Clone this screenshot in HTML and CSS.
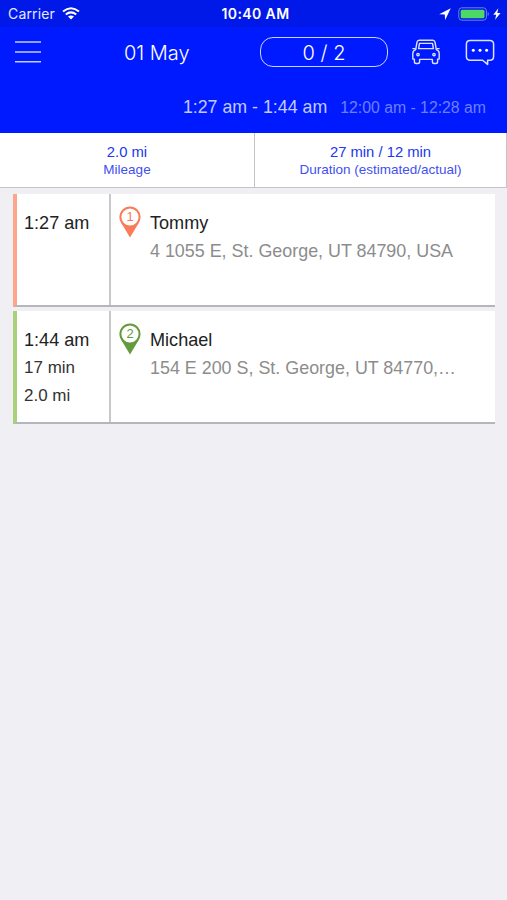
FILE: index.html
```html
<!doctype html>
<html lang="en">
  <head>
    <meta charset="utf-8">
    <title>01 May</title>
    <link rel="stylesheet" href="styles.css">
  </head>
  <body>

    <div class="status-bar">
      <div class="carrier">
        <span>Carrier</span>
        <svg class="wifi" width="18" height="13" viewBox="0 0 18 13">
          <path d="M1 4.6Q9-2.2 17 4.6M3.8 7.6Q9 3.2 14.2 7.6" fill="none" stroke="#fff" stroke-width="2"/>
          <path d="M6 9.6Q9 7.2 12 9.6L9 12.6z" fill="#fff"/>
        </svg>
      </div>
      <div class="clock">10:40 AM</div>
      <div class="indicators">
        <svg class="location" width="12" height="12" viewBox="0 0 12 12"><path d="M11.8.2L.2 6.2l5.6.4.3 5.3z" fill="#fff"/></svg>
        <svg class="battery" width="32" height="14" viewBox="0 0 32 14">
          <rect x=".8" y=".8" width="27.6" height="12.4" rx="3" fill="none" stroke="#6f7ff2"/>
          <rect x="2.7" y="2.7" width="23.8" height="8.6" rx="1.5" fill="#4cd964"/>
          <path d="M29.7 4.8q2.4 2.2 0 4.4z" fill="#6f7ff2"/>
        </svg>
        <svg class="bolt" width="8" height="12" viewBox="0 0 8 12"><path d="M5.3.3L.3 6.8h2.9L2.1 11.8l5.4-6.9H4.3z" fill="#fff"/></svg>
      </div>
    </div>

    <header class="header">
      <div class="nav">
        <svg class="menu" width="26" height="22" viewBox="0 0 26 22"><path d="M0 1h26M0 11h26M0 20.8h26" stroke="#c4ccff" stroke-width="1.5"/></svg>
        <h1 class="date">01 May</h1>
        <div class="count">0 / 2</div>
        <svg class="car" width="30" height="26" viewBox="0 0 30 26" fill="none" stroke="#dce1ff" stroke-width="1.4" stroke-linejoin="round">
          <path d="M4.7 10.6L6 3.2Q6.4 1.2 8.2 1.2h13.6q1.8 0 2.2 2l1.3 7.4q2.9 1 2.9 3.6v5.9h-1.6v2.6q0 1.8-1.8 1.8h-1.6q-1.8 0-1.8-1.8v-2.3H8.6v2.3q0 1.8-1.8 1.8H5.2q-1.8 0-1.8-1.8v-2.6H1.8v-5.9q0-2.6 2.9-3.6z"/>
          <path d="M7.6 9.6l.9-5.2h13l.9 5.2zM1.4 9.6h3.2M25.4 9.6h3.2"/>
          <circle cx="7" cy="15.6" r="1.2"/>
          <circle cx="23" cy="15.6" r="1.2"/>
        </svg>
        <svg class="chat" width="30" height="27" viewBox="0 0 30 27">
          <path d="M5.2 1.4h19.6q3.8 0 3.8 3.8v12.2q0 3.8-3.8 3.8h-2.2v4.2l-5-4.2H5.2q-3.8 0-3.8-3.8V5.2q0-3.8 3.8-3.8z" fill="none" stroke="#dce1ff" stroke-width="1.5" stroke-linejoin="round"/>
          <circle cx="8.3" cy="11.3" r="1.5" fill="#fff"/>
          <circle cx="15" cy="11.3" r="1.5" fill="#fff"/>
          <circle cx="21.6" cy="11.3" r="1.5" fill="#fff"/>
        </svg>
      </div>
      <div class="times">
        <span class="planned">1:27 am - 1:44 am</span>
        <span class="actual">12:00 am - 12:28 am</span>
      </div>
    </header>

    <section class="stats">
      <div class="stat">
        <strong>2.0 mi</strong>
        <span>Mileage</span>
      </div>
      <div class="stat">
        <strong>27 min / 12 min</strong>
        <span>Duration (estimated/actual)</span>
      </div>
    </section>

    <ul class="stops">
      <li class="stop pickup">
        <div class="when">
          <h2>1:27 am</h2>
        </div>
        <div class="who">
          <svg class="pin" width="22" height="32" viewBox="0 0 22 32">
            <path d="M11 31.6L2 16.5h18z" fill="currentColor"/>
            <circle cx="11" cy="11" r="9.6" fill="#fff" stroke="currentColor" stroke-width="2"/>
            <text x="11" y="15.2" text-anchor="middle">1</text>
          </svg>
          <div class="details">
            <h2>Tommy</h2>
            <p class="address">4 1055 E, St. George, UT 84790, USA</p>
          </div>
        </div>
      </li>
      <li class="stop dropoff">
        <div class="when">
          <h2>1:44 am</h2>
          <p>17 min</p>
          <p>2.0 mi</p>
        </div>
        <div class="who">
          <svg class="pin" width="22" height="32" viewBox="0 0 22 32">
            <path d="M11 31.6L2 16.5h18z" fill="currentColor"/>
            <circle cx="11" cy="11" r="9.6" fill="#fff" stroke="currentColor" stroke-width="2"/>
            <text x="11" y="15.2" text-anchor="middle">2</text>
          </svg>
          <div class="details">
            <h2>Michael</h2>
            <p class="address">154 E 200 S, St. George, UT 84770,…</p>
          </div>
        </div>
      </li>
    </ul>

  </body>
</html>
```
FILE: styles.css
```css
* {
  box-sizing: border-box;
}

body, h1, h2, p, ul {
  margin: 0;
  padding: 0;
  font-weight: normal;
}

body {
  min-height: 900px;
  background: #efeff4;
  font-family: "Liberation Sans", Arial, Helvetica, sans-serif;
}

svg {
  display: block;
  flex: none;
}

/* status bar */

.status-bar {
  display: grid;
  grid-template-columns: 1fr auto 1fr;
  align-items: center;
  height: 27px;
  padding: 0 6px 0 8px;
  background: #0018e8;
  color: #fff;
  font-family: Inter, Roboto, sans-serif;
  font-size: 14px;
}

.carrier {
  display: flex;
  align-items: center;
  gap: 7px;
  color: #e6e9ff;
  letter-spacing: .15px;
}

.clock {
  padding-left: 2px;
  font-weight: 600;
  letter-spacing: .4px;
}

.indicators {
  display: flex;
  align-items: center;
  justify-content: flex-end;
}

.battery {
  margin-left: 7px;
}

.bolt {
  margin-left: 3px;
}

/* header */

.header {
  height: 106px;
  background: #001aff;
  color: #fff;
}

.nav {
  display: flex;
  align-items: center;
  height: 50px;
  padding-left: 15px;
}

.date {
  width: 68px;
  margin: 2px 0 0 83px;
  font-family: Inter, Roboto, sans-serif;
  font-size: 20px;
  font-weight: 300;
  white-space: nowrap;
}

.count {
  width: 128px;
  height: 30px;
  margin-left: 68px;
  border: 1.5px solid #ccd3ff;
  border-radius: 13px;
  font-family: Inter, Roboto, sans-serif;
  font-size: 20px;
  font-weight: 300;
  line-height: 30px;
  text-align: center;
}

.car {
  margin-left: 23px;
}

.chat {
  margin-left: 24px;
}

.times {
  display: flex;
  align-items: baseline;
  justify-content: flex-end;
  padding: 20px 21px 0 0;
  white-space: nowrap;
}

.planned {
  margin-right: 13px;
  color: #c3caff;
  font-size: 17.8px;
}

.actual {
  color: #6f7ffa;
  font-size: 15.8px;
}

/* mileage and duration */

.stats {
  display: grid;
  grid-template-columns: 255px 1fr;
  height: 55px;
  border-bottom: 1px solid #c4c4c8;
  background: #fff;
}

.stat {
  padding-top: 10px;
  border-right: 1px solid #c4c4c8;
  color: #3f50f0;
  text-align: center;
}

.stat strong,
.stat span {
  display: block;
  font-weight: normal;
}

.stat strong {
  color: #2038ee;
  font-size: 14.8px;
  line-height: 18px;
}

.stat span {
  font-size: 13.5px;
  line-height: 17px;
}

/* stops */

.stops {
  padding: 6px 12px 0 13px;
  list-style: none;
}

.stop {
  display: flex;
  height: 113px;
  margin-bottom: 4px;
  border-bottom: 2px solid #b5b6ba;
  border-left: 4px solid;
  background: #fff;
}

.pickup {
  border-left-color: #ffa58e;
}

.dropoff {
  border-left-color: #a9d17c;
}

.stop h2 {
  color: #222;
  font-size: 18.1px;
  line-height: 28px;
}

.when {
  width: 94px;
  padding: 15px 0 0 7px;
  border-right: 2px solid #c8c8cc;
}

.when p {
  color: #333;
  font-size: 17px;
  line-height: 28px;
}

.who {
  display: flex;
  flex: 1;
  padding: 12px 0 0 8px;
}

.pin text {
  fill: currentColor;
  font-size: 13px;
}

.pickup .pin {
  color: #fb7b58;
}

.dropoff .pin {
  color: #659a3d;
}

.details {
  padding: 3px 0 0 9px;
}

.address {
  color: #8c8c8c;
  font-size: 17.9px;
  line-height: 28px;
  white-space: nowrap;
}
```
